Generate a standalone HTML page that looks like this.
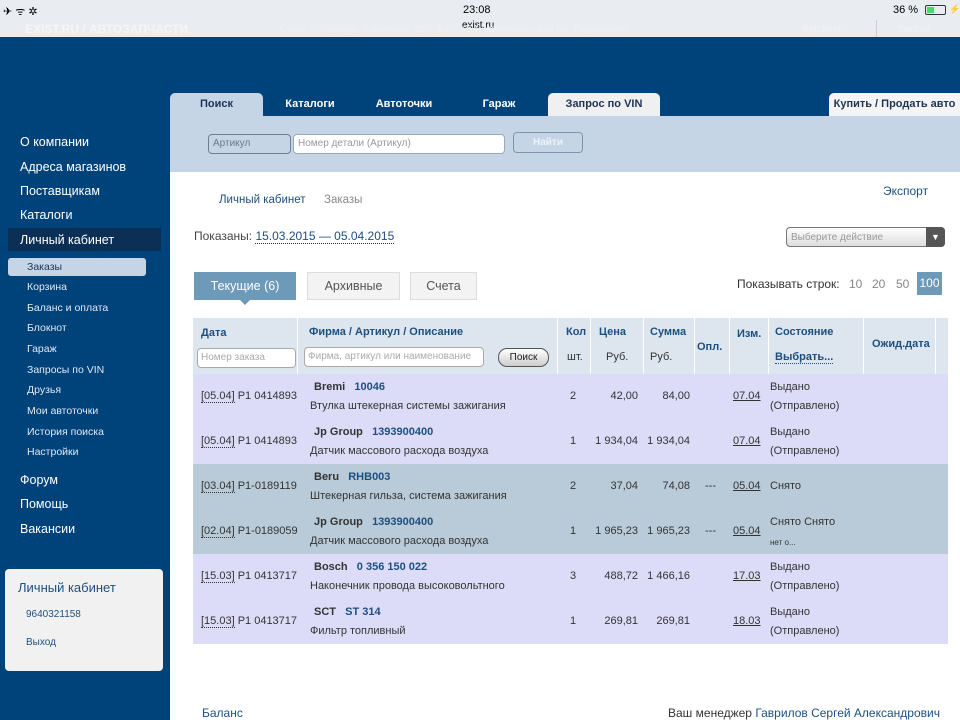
<!DOCTYPE html>
<html><head><meta charset="utf-8"><style>
*{margin:0;padding:0;box-sizing:border-box}
body{width:960px;height:720px;overflow:hidden;position:relative;background:#fff;font-family:"Liberation Sans",Arial,sans-serif;color:#333;font-size:11px}
.a{position:absolute;white-space:nowrap}
.blue{color:#1d4f80}
#top{left:0;top:0;width:960px;height:37px;background:#e9ecf0}
#hdr{left:0;top:37px;width:960px;height:683px;background:#00427a}
#main{left:170px;top:116px;width:790px;height:604px;background:#fff}
#band{left:170px;top:116px;width:790px;height:56px;background:#c5d5e6}
.tab{position:absolute;top:93px;height:23px;font-weight:bold;font-size:11px;color:#fff;text-align:center;line-height:23px}
.side{position:absolute;left:20px;color:#fff;font-size:12.5px}
.sub{position:absolute;left:27px;color:#dfe8f2;font-size:10.5px}
.th{position:absolute;color:#1d4f80;font-weight:bold;font-size:11px}
.row{position:absolute;left:193px;width:755px;height:45px}
.c{position:absolute;font-size:11px;color:#333;white-space:nowrap}
.u{text-decoration:underline}
.d{border-bottom:1px dotted #333}
</style></head><body>
<div class="a" id="top"></div>
<div class="a" style="left:3px;top:4px;font-size:11px;color:#000">✈ ᯤ ✲</div>
<div class="a" style="left:463px;top:4px;font-size:11px;color:#000">23:08</div>
<div class="a" style="left:462px;top:20px;font-size:10px;color:#000">exist.ru</div>
<div class="a" style="left:893px;top:4px;font-size:11px;color:#000">36 %</div>
<div class="a" style="left:925px;top:5px;width:21px;height:10px;border:1px solid #333;border-radius:2px"><div style="width:7px;height:6px;margin:1px;background:#4cd964"></div></div>
<div class="a" style="left:949px;top:4px;font-size:9px;color:#000">⚡</div>
<div class="a" style="left:25px;top:22px;font-size:12px;font-weight:bold;color:#f4f6f8">EXIST.RU / АВТОЗАПЧАСТИ</div>
<div class="a" style="left:280px;top:24px;font-size:10px;color:#eef1f4">Санкт-Петербург, Заневский пр-т, д.65 к.5 (Новочеркасская пл. Ладожская)</div>
<div class="a" style="left:803px;top:24px;font-size:10px;color:#f1f3f6">Корзина</div>
<div class="a" style="left:876px;top:20px;width:1px;height:18px;background:#ccd"></div>
<div class="a" style="left:897px;top:24px;font-size:10px;color:#f1f3f6">Заказы</div>
<div class="a" id="hdr"></div>
<div class="a" id="main"></div>
<div class="a" id="band"></div>
<div class="tab" style="left:170px;width:93px;background:#c5d5e6;color:#1d3555;border-radius:5px 5px 0 0">Поиск</div>
<div class="tab" style="left:263px;width:94px">Каталоги</div>
<div class="tab" style="left:357px;width:94px">Автоточки</div>
<div class="tab" style="left:451px;width:96px">Гараж</div>
<div class="tab" style="left:548px;width:112px;background:#f0f0f0;color:#1d3555;border-radius:5px 5px 0 0">Запрос по VIN</div>
<div class="tab" style="left:829px;width:131px;background:#f4f4f4;color:#1d3555;border-radius:5px 0 0 0">Купить / Продать авто</div>
<div class="a" style="left:208px;top:134px;width:83px;height:20px;border:1px solid #6b7f95;border-radius:4px;background:#c5d5e6;color:#6b7a8a;font-size:10px;padding:3px 4px">Артикул</div>
<div class="a" style="left:293px;top:134px;width:212px;height:20px;border:1px solid #9ab;border-radius:4px;background:#fff;color:#999;font-size:10px;padding:3px 4px">Номер детали (Артикул)</div>
<div class="a" style="left:513px;top:132px;width:70px;height:21px;border:1px solid #7f95ad;border-radius:4px;color:#eef3f8;font-weight:bold;font-size:10px;text-align:center;line-height:19px">Найти</div>
<div class="side" style="top:135px">О компании</div>
<div class="side" style="top:160px">Адреса магазинов</div>
<div class="side" style="top:184px">Поставщикам</div>
<div class="side" style="top:208px">Каталоги</div>
<div class="a" style="left:8px;top:228px;width:153px;height:23px;background:#0c2f55"></div>
<div class="side" style="top:233px">Личный кабинет</div>
<div class="a" style="left:8px;top:258px;width:138px;height:18px;background:#c5d5e6;border-radius:3px"></div>
<div class="sub" style="top:261px;color:#1d3555">Заказы</div>
<div class="sub" style="top:281px">Корзина</div>
<div class="sub" style="top:302px">Баланс и оплата</div>
<div class="sub" style="top:322px">Блокнот</div>
<div class="sub" style="top:343px">Гараж</div>
<div class="sub" style="top:364px">Запросы по VIN</div>
<div class="sub" style="top:384px">Друзья</div>
<div class="sub" style="top:405px">Мои автоточки</div>
<div class="sub" style="top:426px">История поиска</div>
<div class="sub" style="top:446px">Настройки</div>
<div class="side" style="top:473px">Форум</div>
<div class="side" style="top:497px">Помощь</div>
<div class="side" style="top:522px">Вакансии</div>
<div class="a" style="left:5px;top:569px;width:158px;height:102px;background:#f1f1f1;border-radius:4px"></div>
<div class="a blue" style="left:18px;top:580px;font-size:13px">Личный кабинет</div>
<div class="a blue" style="left:26px;top:609px;font-size:10px">9640321158</div>
<div class="a blue" style="left:26px;top:637px;font-size:10px">Выход</div>

<div class="a blue" style="left:219px;top:194px;font-size:11.5px">Личный кабинет</div>
<div class="a" style="left:324px;top:194px;font-size:11.5px;color:#888">Заказы</div>
<div class="a blue" style="left:883px;top:184px;font-size:12px">Экспорт</div>
<div class="a" style="left:194px;top:229px;font-size:12px;color:#444">Показаны: <span class="blue d">15.03.2015 — 05.04.2015</span></div>
<div class="a" style="left:786px;top:227px;width:159px;height:20px;border:1px solid #777;border-radius:4px;background:linear-gradient(#fff,#ddd);font-size:10px;color:#999;padding:4px 4px"> Выберите действие</div>
<div class="a" style="left:926px;top:227px;width:19px;height:20px;background:#555;border-radius:0 4px 4px 0;color:#fff;font-size:9px;text-align:center;line-height:20px">▼</div>
<div class="a" style="left:194px;top:272px;width:102px;height:28px;background:#6d9ab8;color:#fff;font-size:12.5px;text-align:center;line-height:28px">Текущие (6)</div>
<div class="a" style="left:240px;top:300px;width:0;height:0;border:5px solid transparent;border-top-color:#6d9ab8"></div>
<div class="a" style="left:307px;top:272px;width:93px;height:28px;background:#f3f3f3;border:1px solid #ddd;color:#555;font-size:12.5px;text-align:center;line-height:26px">Архивные</div>
<div class="a" style="left:410px;top:272px;width:67px;height:28px;background:#f3f3f3;border:1px solid #ddd;color:#555;font-size:12.5px;text-align:center;line-height:26px">Счета</div>
<div class="a" style="left:737px;top:277px;font-size:12px;color:#333">Показывать строк:</div>
<div class="a" style="left:849px;top:277px;font-size:12px;color:#888">10</div>
<div class="a" style="left:872px;top:277px;font-size:12px;color:#888">20</div>
<div class="a" style="left:896px;top:277px;font-size:12px;color:#888">50</div>
<div class="a" style="left:917px;top:272px;width:25px;height:23px;background:#6d9ab8;color:#fff;font-size:12px;text-align:center;line-height:23px">100</div>

<div class="a" style="left:193px;top:318px;width:755px;height:56px;background:#dde6ee"></div>
<div class="a" style="left:297px;top:318px;width:1px;height:56px;background:#fff"></div>
<div class="a" style="left:557px;top:318px;width:1px;height:56px;background:#fff"></div>
<div class="a" style="left:590px;top:318px;width:1px;height:56px;background:#fff"></div>
<div class="a" style="left:643px;top:318px;width:1px;height:56px;background:#fff"></div>
<div class="a" style="left:694px;top:318px;width:1px;height:56px;background:#fff"></div>
<div class="a" style="left:729px;top:318px;width:1px;height:56px;background:#fff"></div>
<div class="a" style="left:768px;top:318px;width:1px;height:56px;background:#fff"></div>
<div class="a" style="left:863px;top:318px;width:1px;height:56px;background:#fff"></div>
<div class="a" style="left:935px;top:318px;width:1px;height:56px;background:#fff"></div>
<div class="th" style="left:201px;top:327px">Дата</div>
<div class="th" style="left:309px;top:326px">Фирма / Артикул / Описание</div>
<div class="th" style="left:566px;top:326px">Кол</div>
<div class="th" style="left:599px;top:326px">Цена</div>
<div class="th" style="left:650px;top:326px">Сумма</div>
<div class="th" style="left:697px;top:341px">Опл.</div>
<div class="th" style="left:737px;top:328px">Изм.</div>
<div class="th" style="left:775px;top:326px">Состояние</div>
<div class="th" style="left:872px;top:338px">Ожид.дата</div>
<div class="th" style="left:567px;top:351px;color:#333;font-weight:normal">шт.</div>
<div class="th" style="left:606px;top:351px;color:#333;font-weight:normal">Руб.</div>
<div class="th" style="left:650px;top:351px;color:#333;font-weight:normal">Руб.</div>
<div class="th d" style="left:775px;top:351px;border-bottom-color:#1d4f80">Выбрать...</div>
<div class="a" style="left:197px;top:348px;width:99px;height:20px;border:1px solid #aaa;border-radius:4px;background:#fff;color:#aaa;font-size:10px;padding:3px 3px">Номер заказа</div>
<div class="a" style="left:304px;top:347px;width:180px;height:20px;border:1px solid #aaa;border-radius:4px;background:#fff;color:#aaa;font-size:10px;padding:3px 3px">Фирма, артикул или наименование</div>
<div class="a" style="left:498px;top:348px;width:51px;height:19px;border:1px solid #555;border-radius:9px;background:linear-gradient(#fff,#ccc);color:#222;font-size:10px;text-align:center;line-height:17px">Поиск</div>

<div class="row" style="top:374px;background:#dcdcf8">
<div class="c" style="left:8px;top:16px"><span class="d">[05.04]</span> Р1 0414893</div>
<div class="c" style="left:121px;top:7px;font-weight:bold"><span>Bremi</span>&nbsp;&nbsp; <span class="blue">10046</span></div>
<div class="c" style="left:117px;top:26px">Втулка штекерная системы зажигания</div>
<div class="c" style="left:377px;top:16px">2</div>
<div class="c" style="right:310px;top:16px">42,00</div>
<div class="c" style="right:258px;top:16px">84,00</div>
<div class="c u" style="left:540px;top:16px">07.04</div>
<div class="c" style="left:577px;top:7px">Выдано</div>
<div class="c" style="left:577px;top:26px">(Отправлено)</div>
</div>
<div class="row" style="top:419px;background:#dcdcf8">
<div class="c" style="left:8px;top:16px"><span class="d">[05.04]</span> Р1 0414893</div>
<div class="c" style="left:121px;top:7px;font-weight:bold"><span>Jp Group</span>&nbsp;&nbsp; <span class="blue">1393900400</span></div>
<div class="c" style="left:117px;top:26px">Датчик массового расхода воздуха</div>
<div class="c" style="left:377px;top:16px">1</div>
<div class="c" style="right:310px;top:16px">1 934,04</div>
<div class="c" style="right:258px;top:16px">1 934,04</div>
<div class="c u" style="left:540px;top:16px">07.04</div>
<div class="c" style="left:577px;top:7px">Выдано</div>
<div class="c" style="left:577px;top:26px">(Отправлено)</div>
</div>
<div class="row" style="top:464px;background:#b9cbd8">
<div class="c" style="left:8px;top:16px"><span class="d">[03.04]</span> Р1-0189119</div>
<div class="c" style="left:121px;top:7px;font-weight:bold"><span>Beru</span>&nbsp;&nbsp; <span class="blue">RHB003</span></div>
<div class="c" style="left:117px;top:26px">Штекерная гильза, система зажигания</div>
<div class="c" style="left:377px;top:16px">2</div>
<div class="c" style="right:310px;top:16px">37,04</div>
<div class="c" style="right:258px;top:16px">74,08</div>
<div class="c" style="left:512px;top:16px">---</div>
<div class="c u" style="left:540px;top:16px">05.04</div>
<div class="c" style="left:577px;top:16px">Снято</div>
</div>
<div class="row" style="top:509px;background:#b9cbd8">
<div class="c" style="left:8px;top:16px"><span class="d">[02.04]</span> Р1-0189059</div>
<div class="c" style="left:121px;top:7px;font-weight:bold"><span>Jp Group</span>&nbsp;&nbsp; <span class="blue">1393900400</span></div>
<div class="c" style="left:117px;top:26px">Датчик массового расхода воздуха</div>
<div class="c" style="left:377px;top:16px">1</div>
<div class="c" style="right:310px;top:16px">1 965,23</div>
<div class="c" style="right:258px;top:16px">1 965,23</div>
<div class="c" style="left:512px;top:16px">---</div>
<div class="c u" style="left:540px;top:16px">05.04</div>
<div class="c" style="left:577px;top:7px">Снято Снято</div>
<div class="c" style="left:577px;top:29px;font-size:8px">нет о...</div>
</div>
<div class="row" style="top:554px;background:#dcdcf8">
<div class="c" style="left:8px;top:16px"><span class="d">[15.03]</span> Р1 0413717</div>
<div class="c" style="left:121px;top:7px;font-weight:bold"><span>Bosch</span>&nbsp;&nbsp; <span class="blue">0 356 150 022</span></div>
<div class="c" style="left:117px;top:26px">Наконечник провода высоковольтного</div>
<div class="c" style="left:377px;top:16px">3</div>
<div class="c" style="right:310px;top:16px">488,72</div>
<div class="c" style="right:258px;top:16px">1 466,16</div>
<div class="c u" style="left:540px;top:16px">17.03</div>
<div class="c" style="left:577px;top:7px">Выдано</div>
<div class="c" style="left:577px;top:26px">(Отправлено)</div>
</div>
<div class="row" style="top:599px;background:#dcdcf8">
<div class="c" style="left:8px;top:16px"><span class="d">[15.03]</span> Р1 0413717</div>
<div class="c" style="left:121px;top:7px;font-weight:bold"><span>SCT</span>&nbsp;&nbsp; <span class="blue">ST 314</span></div>
<div class="c" style="left:117px;top:26px">Фильтр топливный</div>
<div class="c" style="left:377px;top:16px">1</div>
<div class="c" style="right:310px;top:16px">269,81</div>
<div class="c" style="right:258px;top:16px">269,81</div>
<div class="c u" style="left:540px;top:16px">18.03</div>
<div class="c" style="left:577px;top:7px">Выдано</div>
<div class="c" style="left:577px;top:26px">(Отправлено)</div>
</div>
<div class="a blue" style="left:202px;top:706px;font-size:12px">Баланс</div>
<div class="a" style="left:668px;top:706px;font-size:12px;color:#333">Ваш менеджер <span class="blue">Гаврилов Сергей Александрович</span></div>
</body></html>
